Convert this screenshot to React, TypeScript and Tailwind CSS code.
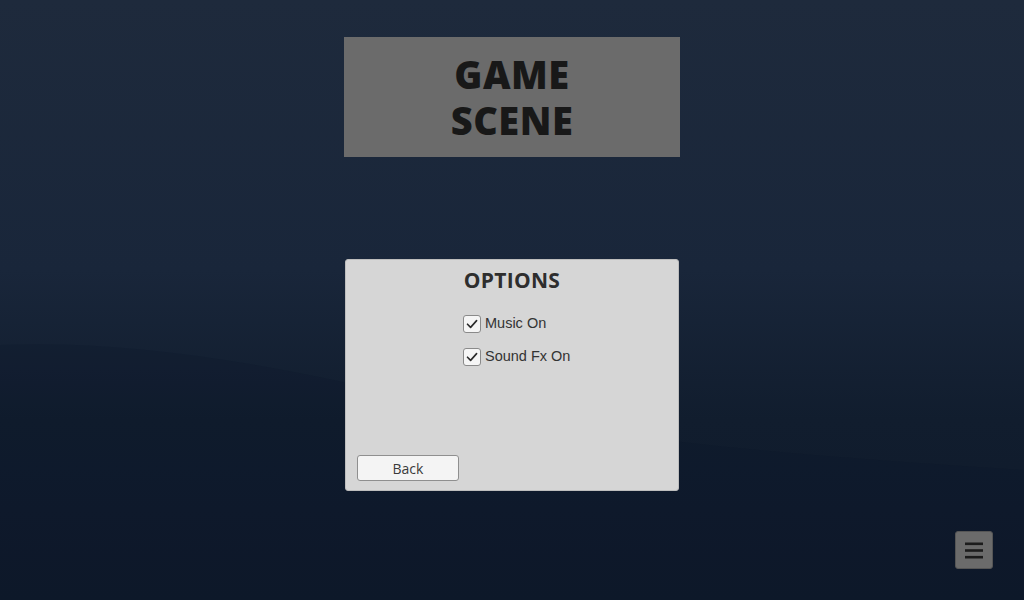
import React, { useState } from 'react';

// Options screen over the game scene.
// — title card up top, options panel in the middle, menu button bottom-right

const Checkbox: React.FC<{ label: string; checked: boolean; onToggle: () => void }> = ({
  label,
  checked,
  onToggle,
}) => (
  <button onClick={onToggle} className="flex items-center gap-[4px] h-[18px]">
    <span className="w-[18px] h-[18px] rounded-[3px] border border-[#8a8a8a] bg-[#f5f5f5] flex items-center justify-center shrink-0">
      {checked && (
        <svg className="w-[14px] h-[14px]" viewBox="0 0 14 14" fill="none" stroke="#2a2a2a" strokeWidth={1.6}>
          <path d="M2.5 7.2 L5.6 10.4 L11.6 3.6" strokeLinecap="round" strokeLinejoin="round" />
        </svg>
      )}
    </span>
    <span className="text-[14.5px] leading-none text-[#333] font-['Liberation_Sans',Arial,sans-serif] -mt-[2px]">
      {label}
    </span>
  </button>
);

export default function App() {
  const [music, setMusic] = useState(true);
  const [sfx, setSfx] = useState(true);

  return (
    <div className="relative w-[1024px] h-[600px] overflow-hidden bg-[linear-gradient(180deg,#1e2a3c_0%,#19263a_45%,#111d2e_70%,#0e192a_100%)] font-['Open_Sans',sans-serif]">
      {/* subtle wave in the backdrop */}
      <svg className="absolute inset-0 w-full h-full" viewBox="0 0 1024 600" preserveAspectRatio="none">
        <path
          d="M0 345 C 120 340, 260 360, 420 400 C 560 430, 700 450, 1024 470 L1024 600 L0 600 Z"
          fill="#0c1626"
          opacity="0.2"
        />
      </svg>

      <div className="relative flex flex-col items-center">
        {/* Title card */}
        <div className="mt-[37px] w-[336px] h-[120px] bg-[#6b6b6b] flex flex-col items-center justify-center text-[38px] leading-[46px] font-extrabold text-[#181818] tracking-[0.5px]">
          <span className="block">GAME</span>
          <span className="block">SCENE</span>
        </div>

        {/* Options panel */}
        <div className="mt-[102px] w-[334px] h-[232px] bg-[#d6d6d6] rounded-[3px] border border-[#bdbdbd] flex flex-col">
          <h2 className="mt-[7px] text-center text-[21px] leading-[26px] font-bold text-[#2e2e2e] tracking-[0.3px]">
            OPTIONS
          </h2>
          <div className="mt-[22px] ml-[117px] flex flex-col items-start gap-[15px]">
            <Checkbox label="Music On" checked={music} onToggle={() => setMusic((v) => !v)} />
            <Checkbox label="Sound Fx On" checked={sfx} onToggle={() => setSfx((v) => !v)} />
          </div>
          <div className="mt-auto mb-[9px] ml-[11px]">
            <button className="w-[102px] h-[26px] rounded-[3px] border border-[#8f8f8f] bg-[#f4f4f4] text-[14px] text-[#3a3a3a] leading-none flex items-center justify-center pt-[2px]">
              Back
            </button>
          </div>
        </div>
      </div>

      {/* Menu button, floating bottom-right */}
      <button
        className="absolute left-[955px] top-[531px] w-[38px] h-[38px] rounded-[3px] bg-[#6b6b6b] border border-[#555] flex items-center justify-center"
        aria-label="Menu"
      >
        <svg className="w-[18px] h-[17px]" viewBox="0 0 18 17" fill="#1c1c1c">
          <rect x="0" y="0.5" width="18" height="2.6" />
          <rect x="0" y="7.2" width="18" height="2.6" />
          <rect x="0" y="13.9" width="18" height="2.6" />
        </svg>
      </button>
    </div>
  );
}
